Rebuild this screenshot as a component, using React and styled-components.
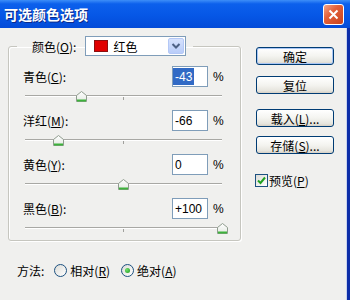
import styled, { createGlobalStyle } from "styled-components";

const GlobalStyle = createGlobalStyle`
  html, body {
    margin: 0;
    padding: 0;
    background: #f0f0ee;
  }
  body {
    font-family: "Noto Sans CJK SC", "Noto Sans", sans-serif;
    font-size: 12px;
    color: #000;
  }
`;

const Window = styled.div`
  width: 350px;
  height: 300px;
  display: flex;
  flex-direction: column;
  overflow: hidden;
  background: #f0f0ee;
`;

const TitleBar = styled.div`
  height: 28px;
  flex: none;
  display: flex;
  align-items: center;
  justify-content: space-between;
  padding: 0 6px 0 4px;
  background: linear-gradient(#3d8ef8 0%, #0c60ec 14%, #0657e6 55%, #034bd8 100%);
`;

const Title = styled.div`
  color: #fff;
  font-weight: 700;
  font-size: 14px;
  line-height: 28px;
  text-shadow: 1px 1px 0 #0b2a8a;
`;

const CloseButton = styled.div`
  width: 21px;
  height: 21px;
  box-sizing: border-box;
  border: 1px solid #fff;
  border-radius: 3px;
  background: linear-gradient(135deg, #f4a588 0%, #e2603a 40%, #c9431e 100%);
  display: flex;
  align-items: center;
  justify-content: center;
`;

const Body = styled.div`
  flex: 1;
  display: flex;
  padding: 8px 0 0 8px;
  border-right: 3px solid #0d2ea8;
  box-shadow: inset -1px 0 0 #c9d3ee;
`;

const LeftCol = styled.div`
  width: 233px;
  display: flex;
  flex-direction: column;
`;

const Group = styled.fieldset`
  margin: 0;
  padding: 10px 10px 0 14px;
  min-width: 0;
  border: 1px solid #c6c6bf;
  border-radius: 3px;
  box-shadow: inset 1px 1px 0 #fff, 1px 1px 0 #fff;
`;

const Legend = styled.legend`
  margin-left: -6px;
  padding: 0 7px 0 15px;
`;

const LegendInner = styled.span`
  display: flex;
  align-items: center;
  height: 20px;
  gap: 9px;
`;

const Select = styled.div`
  width: 101px;
  height: 20px;
  box-sizing: border-box;
  border: 1px solid #7f9db9;
  background: #fff;
  display: flex;
  align-items: center;
  padding-left: 8px;
`;

const Swatch = styled.div`
  width: 14px;
  height: 12px;
  box-sizing: border-box;
  background: ${(p) => p.color};
  border: 1px solid #8a1010;
  margin-right: 5px;
`;

const DropButton = styled.div`
  margin-left: auto;
  margin-right: 1px;
  width: 16px;
  height: 16px;
  box-sizing: border-box;
  border: 1px solid #b4c8f6;
  border-radius: 2px;
  background: linear-gradient(#d6e2fd, #b9cdf9);
  display: flex;
  align-items: center;
  justify-content: center;
`;

const Row = styled.div`
  display: flex;
  flex-direction: column;
  margin-bottom: ${(p) => (p.last ? 0 : 2)}px;
`;

const RowTop = styled.div`
  height: 21px;
  display: flex;
  align-items: center;
`;

const Label = styled.div`
  flex: 1;
`;

const Input = styled.div`
  width: 36px;
  height: 21px;
  box-sizing: border-box;
  border: 1px solid #7f9db9;
  background: #fff;
  display: flex;
  align-items: center;
  padding-left: ${(p) => (p.selected ? 0 : 2)}px;
  font-family: "Liberation Sans", Arial, sans-serif;
  font-size: 12px;
`;

const Selected = styled.span`
  background: #316ac5;
  color: #fff;
  height: 17px;
  display: flex;
  align-items: center;
  padding: 0 2px;
`;

const Percent = styled.div`
  width: 22px;
  box-sizing: border-box;
  padding-left: 5px;
  font-family: "Liberation Sans", Arial, sans-serif;
`;

const Slider = styled.div`
  position: relative;
  height: 21px;
`;

const Track = styled.div`
  margin: 8px 0 0 2px;
  width: 197px;
  height: 2px;
  box-sizing: border-box;
  border-top: 1px solid #a8a8a4;
  border-bottom: 1px solid #fff;
  position: relative;

  &::after {
    content: "";
    position: absolute;
    left: 98px;
    top: 1px;
    width: 1px;
    height: 3px;
    background: #a0a09c;
  }
`;

const Thumb = styled.svg`
  position: absolute;
  top: 4px;
`;

const Methods = styled.div`
  margin-top: 19px;
  height: 20px;
  display: flex;
  align-items: center;
  padding-left: 9px;
`;

const MethodLabel = styled.span`
  margin-right: 10px;
`;

const RadioItem = styled.label`
  display: flex;
  align-items: center;
  gap: 3px;
  margin-right: 11px;
`;

const RadioCircle = styled.span`
  width: 13px;
  height: 13px;
  box-sizing: border-box;
  border-radius: 50%;
  border: 1px solid #1c5180;
  background: linear-gradient(135deg, #dcdcd7, #ffffff);
  display: flex;
  align-items: center;
  justify-content: center;

  &::after {
    content: "";
    display: ${(p) => (p.checked ? "block" : "none")};
    width: 5px;
    height: 5px;
    border-radius: 50%;
    background: radial-gradient(circle at 35% 35%, #6fe26b, #1e961e);
  }
`;

const RightCol = styled.div`
  margin-left: 15px;
  width: 78px;
  display: flex;
  flex-direction: column;
`;

const Button = styled.div`
  margin-top: ${(p) => p.gap}px;
  height: 18px;
  box-sizing: border-box;
  border: 1px solid #003c74;
  border-radius: 3px;
  background: linear-gradient(#ffffff 0%, #f4f4f0 50%, #e6e5de 85%, #d6d0c5 100%);
  box-shadow: ${(p) => (p.primary ? "inset 0 0 0 1px #a9c6f5" : "none")};
  display: flex;
  align-items: center;
  justify-content: center;
  font-size: 12px;
`;

const CheckRow = styled.label`
  margin-top: 18px;
  margin-left: -1px;
  display: flex;
  align-items: center;
  gap: 1px;
`;

const CheckBox = styled.span`
  width: 13px;
  height: 13px;
  box-sizing: border-box;
  border: 1px solid #1c5180;
  background: linear-gradient(135deg, #dcdcd7, #ffffff);
  display: flex;
  align-items: center;
  justify-content: center;
`;

const rows = [
  { name: "青色", key: "C", value: -43, text: "-43", selected: true },
  { name: "洋红", key: "M", value: -66, text: "-66" },
  { name: "黄色", key: "Y", value: 0, text: "0" },
  { name: "黑色", key: "B", value: 100, text: "+100" },
];

function SliderThumb({ value }) {
  const x = 2 + ((value + 100) / 200) * 197 - 5.5;
  return (
    <Thumb width="11" height="11" viewBox="0 0 11 11" style={{ left: x }}>
      <defs>
        <linearGradient id="tg" x1="0" y1="0" x2="0" y2="1">
          <stop offset="0" stopColor="#ffffff" />
          <stop offset="1" stopColor="#e4e9e2" />
        </linearGradient>
      </defs>
      <path d="M0.5 10.5 V4.5 L5.5 0.5 L10.5 4.5 V10.5 Z" fill="url(#tg)" stroke="#8f9c8e" />
      <path d="M1 9.5 H10" stroke="#3db23b" strokeWidth="2" />
    </Thumb>
  );
}

export default function App() {
  return (
    <>
      <GlobalStyle />
      <Window>
        <TitleBar>
          <Title>可选颜色选项</Title>
          <CloseButton>
            <svg width="11" height="11" viewBox="0 0 11 11">
              <path d="M1.5 1.5 L9.5 9.5 M9.5 1.5 L1.5 9.5" stroke="#fff" strokeWidth="2" />
            </svg>
          </CloseButton>
        </TitleBar>
        <Body>
          <LeftCol>
            <Group>
              <Legend>
                <LegendInner>
                  <span>
                    颜色(<u>O</u>):
                  </span>
                  <Select>
                    <Swatch color="#e00000" />
                    <span>红色</span>
                    <DropButton>
                      <svg width="10" height="8" viewBox="0 0 10 8">
                        <path d="M1.5 2 L5 5.5 L8.5 2" fill="none" stroke="#4d6185" strokeWidth="2" />
                      </svg>
                    </DropButton>
                  </Select>
                </LegendInner>
              </Legend>
              {rows.map((r, i) => (
                <Row key={r.key} last={i === rows.length - 1}>
                  <RowTop>
                    <Label>
                      {r.name}(<u>{r.key}</u>):
                    </Label>
                    <Input selected={r.selected}>
                      {r.selected ? <Selected>{r.text}</Selected> : r.text}
                    </Input>
                    <Percent>%</Percent>
                  </RowTop>
                  <Slider>
                    <Track />
                    <SliderThumb value={r.value} />
                  </Slider>
                </Row>
              ))}
            </Group>
            <Methods>
              <MethodLabel>方法:</MethodLabel>
              <RadioItem>
                <RadioCircle />
                <span>
                  相对(<u>R</u>)
                </span>
              </RadioItem>
              <RadioItem>
                <RadioCircle checked />
                <span>
                  绝对(<u>A</u>)
                </span>
              </RadioItem>
            </Methods>
          </LeftCol>
          <RightCol>
            <Button primary gap={11}>确定</Button>
            <Button gap={11}>复位</Button>
            <Button gap={15}>
              载入(<u>L</u>)...
            </Button>
            <Button gap={9}>
              存储(<u>S</u>)...
            </Button>
            <CheckRow>
              <CheckBox>
                <svg width="9" height="9" viewBox="0 0 9 9">
                  <path d="M1 4.5 L3.5 7 L8 1.5" fill="none" stroke="#21a121" strokeWidth="2" />
                </svg>
              </CheckBox>
              <span>
                预览(<u>P</u>)
              </span>
            </CheckRow>
          </RightCol>
        </Body>
      </Window>
    </>
  );
}
